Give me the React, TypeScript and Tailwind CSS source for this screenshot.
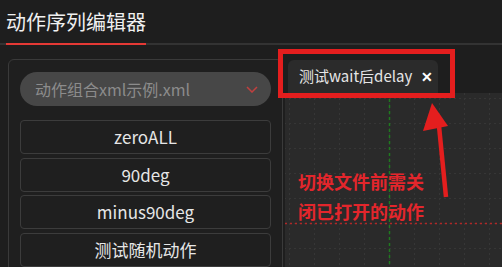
import React from "react";

const font = { fontFamily: '"Noto Sans CJK SC", "Noto Sans", sans-serif' };

function Grid() {
  return (
    <svg className="absolute inset-0" width="217" height="174">
      <defs>
        <pattern id="g" x="4" y="5" width="25" height="25" patternUnits="userSpaceOnUse">
          <line x1="0.5" y1="0" x2="0.5" y2="25" stroke="#363636" strokeWidth="1" strokeDasharray="2 3" />
          <line x1="0" y1="0.5" x2="25" y2="0.5" stroke="#363636" strokeWidth="1" strokeDasharray="2 3" />
        </pattern>
      </defs>
      <rect width="217" height="174" fill="url(#g)" />
      <line x1="104.5" y1="0" x2="104.5" y2="174" stroke="#1f7a1f" strokeWidth="1.5" strokeDasharray="3 3" />
      <line x1="0" y1="130.5" x2="217" y2="130.5" stroke="#b02828" strokeWidth="1.5" strokeDasharray="2 3" />
    </svg>
  );
}

export default function App() {
  const items = ["zeroALL", "90deg", "minus90deg", "测试随机动作"];
  return (
    <div className="relative w-[502px] h-[267px] overflow-hidden bg-[#1e1e1e]" style={font}>
      <div className="border-b-2 border-[#333333] pl-[6px]">
        <div className="w-[140px] border-b-2 border-[#e53935] -mb-[2px] pt-[8px] pb-[7px] text-[20px] leading-[28px] text-[#f0f0f0] whitespace-nowrap">
          动作序列编辑器
        </div>
      </div>
      <div className="flex">
        <div className="ml-[8px] mt-[14px] w-[275px] h-[240px] rounded-[6px] border border-[#3a3a3a] bg-[#1f1f1f] pl-[11px] pr-[11px] pt-[12px] shrink-0">
          <div className="flex items-center justify-between h-[34px] rounded-full bg-[#474747] pl-[15px] pr-[13px]">
            <span className="text-[16px] text-[#8c8c8c] whitespace-nowrap">动作组合xml示例.xml</span>
            <svg width="12" height="7" viewBox="0 0 12 7">
              <path d="M1 1 L6 6 L11 1" fill="none" stroke="#c0403f" strokeWidth="1.5" />
            </svg>
          </div>
          <div className="mt-[14px] flex flex-col gap-[3.5px]">
            {items.map((t) => (
              <div
                key={t}
                className="h-[34px] rounded-[4px] border border-[#3c3c3c] flex items-center justify-center text-[17px] text-[#e6e6e6] whitespace-nowrap"
              >
                {t}
              </div>
            ))}
          </div>
        </div>
        <div className="ml-[2px] mt-[14px] flex-1 flex flex-col">
          <div className="flex h-[34px] pl-[3px] pt-[1px]">
            <div className="w-[150px] rounded-t-[6px] bg-[#2b2b2b] flex items-center pl-[11px] pr-[4px] justify-between">
              <span className="text-[15px] text-[#e6e6e6] whitespace-nowrap">测试wait后delay</span>
              <span className="text-[14px] font-bold text-white mr-[1px]">✕</span>
            </div>
          </div>
          <div className="relative h-[174px] bg-[#2a2a2a]">
            <Grid />
          </div>
        </div>
      </div>
      {/* annotations */}
      <div className="absolute left-[278px] top-[49px] w-[177px] h-[49px] border-[5px] border-[#e41e1e]" />
      <svg className="absolute left-[415px] top-[100px]" width="45" height="105" viewBox="0 0 45 105">
        <polygon points="17,3 8,31 33,26" fill="#e41e1e" />
        <line x1="24" y1="26" x2="31" y2="97" stroke="#e41e1e" strokeWidth="4.5" />
      </svg>
      <div className="absolute left-[298px] top-[166px] text-[18px] leading-[30px] font-bold text-[#e3262c] whitespace-nowrap">
        <div>切换文件前需关</div>
        <div>闭已打开的动作</div>
      </div>
    </div>
  );
}
